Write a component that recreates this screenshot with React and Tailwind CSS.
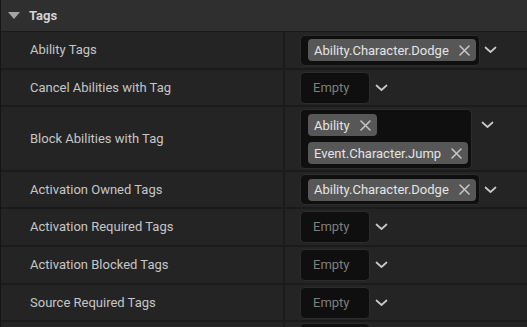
import React from "react";

const X = () => (
  <svg width="11" height="11" viewBox="0 0 11 11" className="shrink-0">
    <path d="M1 1 L10 10 M10 1 L1 10" stroke="#c4c4c4" strokeWidth="1.6" strokeLinecap="round" />
  </svg>
);

const Chevron = () => (
  <svg width="13" height="8" viewBox="0 0 13 8" className="shrink-0">
    <path d="M1.5 1.5 L6.5 6 L11.5 1.5" stroke="#c8c8c8" strokeWidth="1.7" fill="none" strokeLinecap="round" strokeLinejoin="round" />
  </svg>
);

const Chip = ({ text }) => (
  <div className="flex items-center h-[22px] bg-[#575757] rounded-[4px] pl-[6px] pr-[6px] gap-[10px] text-[#e4e4e4] text-[13px] leading-none">
    <span>{text}</span>
    <X />
  </div>
);

const Empty = ({ hideText }) => (
  <div className="flex items-center gap-[5px]">
    <div className="w-[70px] h-[32px] bg-[#0f0f0f] border border-[#2c2c2c] rounded-[5px] flex items-center pl-[12px] text-[13px] text-[#7e7e7e]">
      {hideText ? "" : "Empty"}
    </div>
    <Chevron />
  </div>
);

const Tags = ({ tags }) => (
  <div className="flex items-center gap-[4px]">
    <div className="w-[180px] h-[31px] bg-[#0f0f0f] border border-[#2c2c2c] rounded-[5px] flex items-center pl-[7px]">
      <Chip text={tags} />
    </div>
    <Chevron />
  </div>
);

const Row = ({ label, h, children, top }) => (
  <div className={`flex border-b-2 border-[#1b1b1b] ${h}`}>
    <div className="w-[284px] shrink-0 flex items-center pl-[29px] text-[13px] text-[#c6c6c6] border-r-2 border-[#1b1b1b]">
      {label}
    </div>
    <div className={`flex-1 flex pl-[15px] ${top ? "items-start pt-[2px]" : "items-center"}`}>{children}</div>
  </div>
);

export default function App() {
  return (
    <div className="w-[527px] h-[327px] overflow-hidden bg-[#242424] border-l border-[#151515]" style={{ fontFamily: "Roboto, 'Noto Sans', sans-serif" }}>
      <div className="h-[32px] bg-[#2f2f2f] border-b border-[#1a1a1a] flex items-center">
        <svg width="12" height="8" viewBox="0 0 12 8" className="ml-[7px]">
          <path d="M0 0 L12 0 L6 7 Z" fill="#a4a4a4" />
        </svg>
        <span className="ml-[9px] text-[13px] font-bold text-[#d4d4d4]">Tags</span>
      </div>
      <Row label="Ability Tags" h="h-[38px]">
        <Tags tags="Ability.Character.Dodge" />
      </Row>
      <Row label="Cancel Abilities with Tag" h="h-[37px]">
        <Empty />
      </Row>
      <Row label="Block Abilities with Tag" h="h-[65px]" top>
        <div className="flex items-start gap-[9px]">
          <div className="w-[172px] bg-[#0f0f0f] border border-[#2c2c2c] rounded-[5px] flex flex-col items-start gap-[6px] pl-[7px] pt-[4px] pb-[4px]">
            <Chip text="Ability" />
            <Chip text="Event.Character.Jump" />
          </div>
          <div className="pt-[12px]">
            <Chevron />
          </div>
        </div>
      </Row>
      <Row label="Activation Owned Tags" h="h-[37px]">
        <Tags tags="Ability.Character.Dodge" />
      </Row>
      <Row label="Activation Required Tags" h="h-[38px]">
        <Empty />
      </Row>
      <Row label="Activation Blocked Tags" h="h-[38px]">
        <Empty />
      </Row>
      <Row label="Source Required Tags" h="h-[37px]">
        <Empty />
      </Row>
      <Row label="" h="h-[37px]">
        <div className="self-start mt-[1px]">
          <Empty hideText />
        </div>
      </Row>
    </div>
  );
}
